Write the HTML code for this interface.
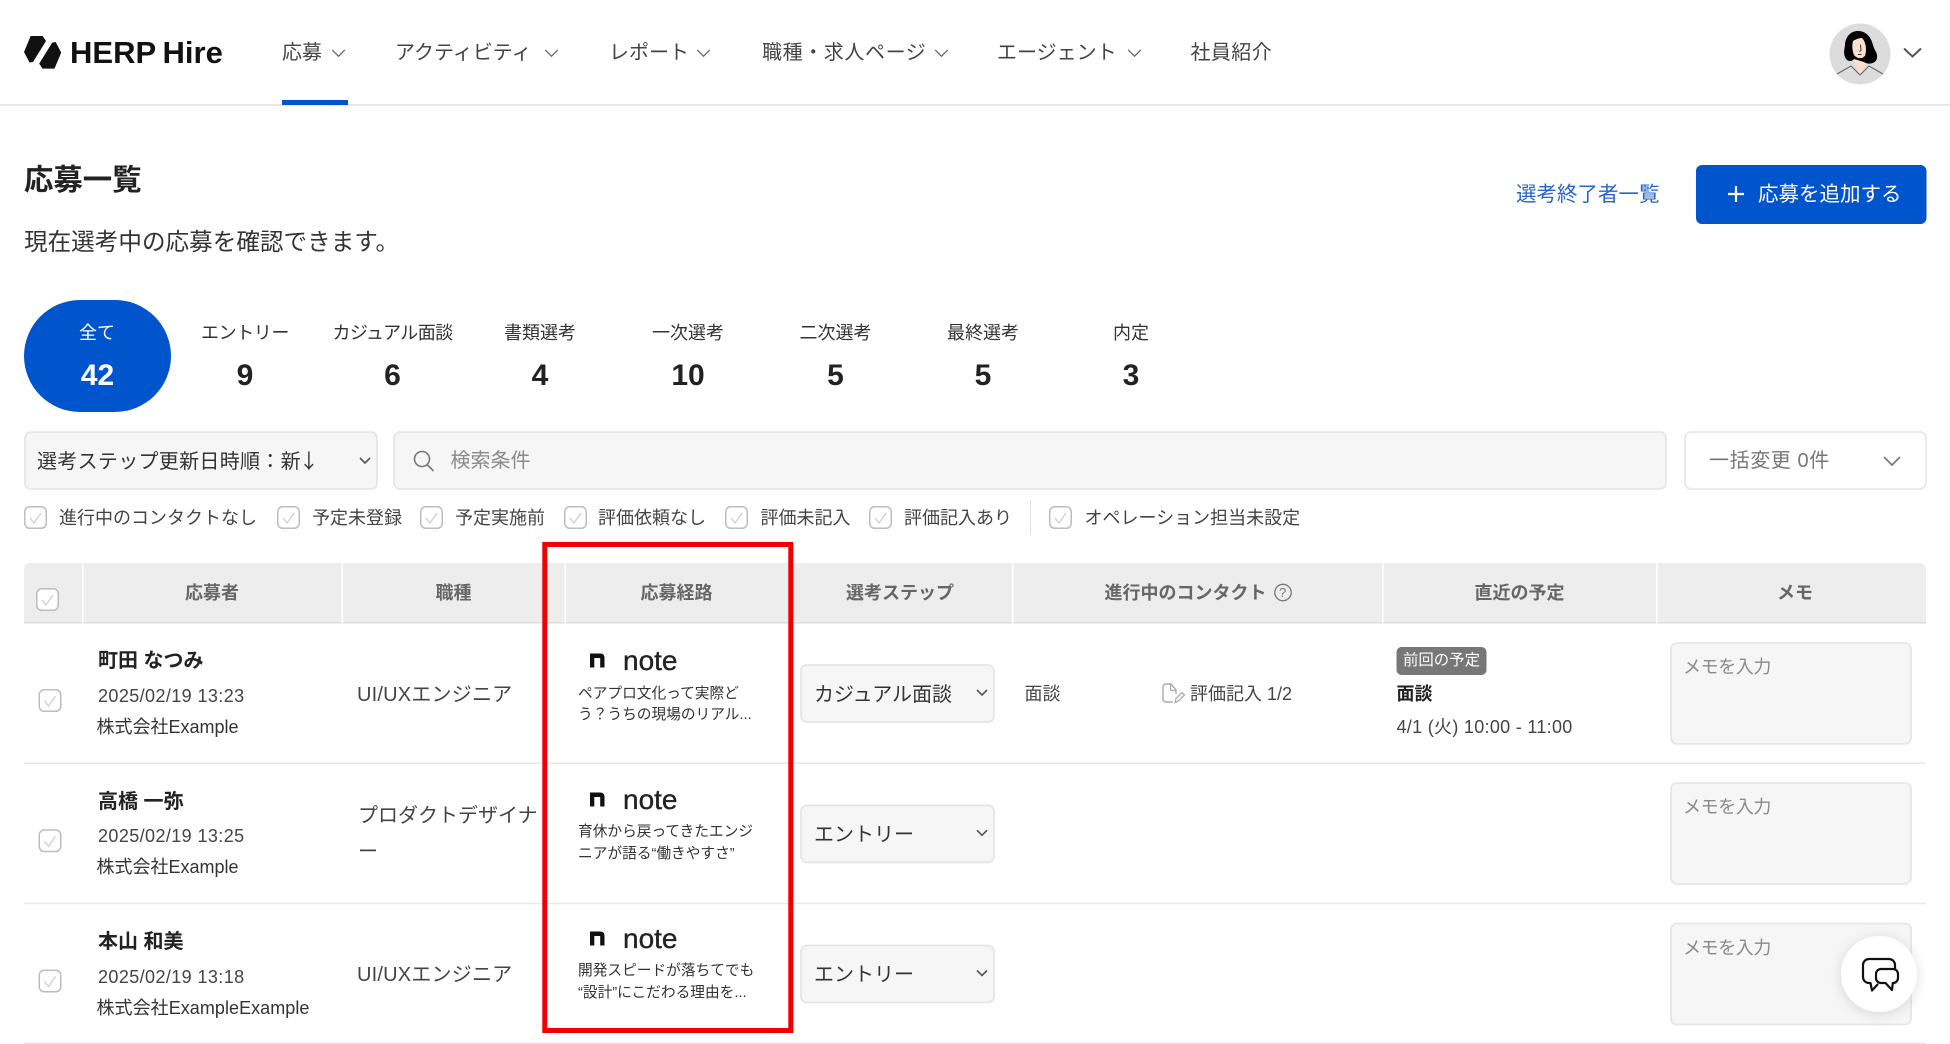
<!DOCTYPE html>
<html lang="ja"><head><meta charset="utf-8"><title>応募一覧</title>
<style>
html,body{margin:0;padding:0;background:#fff}
body{width:1950px;height:1044px;position:relative;overflow:hidden;font-family:"Liberation Sans","Noto Sans CJK JP",sans-serif;color:#333}
svg.bg{position:absolute;left:0;top:0}
.t{position:absolute;white-space:nowrap;line-height:40px;height:40px;font-size:18px}
.c{transform:translateX(-50%)}
.n{font-size:20px;color:#444}
.h{font-weight:700;color:#666;font-size:18px}
.s{font-size:18px;color:#444}
.num{font-size:30px;font-weight:700;color:#222}
.b{font-weight:700;color:#222}
.d{font-size:14.7px;color:#333}
.g{color:#8a8a8a}
.nt{font-size:28px;color:#222;-webkit-text-stroke:.35px #222}
</style></head><body>
<svg class="bg" width="1950" height="1044" viewBox="0 0 1950 1044" fill="none">
<defs>
<symbol id="cb" viewBox="0 0 23 23" overflow="visible"><rect x=".75" y=".75" width="21.5" height="21.5" rx="5" fill="#fff" stroke="#bdbdbd" stroke-width="1.5"/><path d="M6 12l4 5 7-10" stroke="#cfcfcf" stroke-width="1.3"/></symbol>
<symbol id="cv" viewBox="0 0 16 10" overflow="visible"><path d="M1 1l7 7 7-7" stroke="#666" stroke-width="1.4"/></symbol>
<symbol id="sc" viewBox="0 0 12 8" overflow="visible"><path d="M1 1l5 5 5-5" stroke="#555" stroke-width="1.6"/></symbol>
</defs>
<!-- header -->
<rect x="0" y="104" width="1950" height="2" fill="#e8e8e8"/>
<rect x="282" y="100" width="66" height="5" fill="#0055cc"/>
<path d="M30.7 36H42.7L46 41 33 62 29.5 62.5 24 52Z" fill="#111"/>
<path d="M54.5 68.6H42.5L39.2 63.6 52.2 42.6 55.7 42 61.2 52.6Z" fill="#111"/>
<use href="#cv" x="331" y="49" width="15" height="9"/>
<use href="#cv" x="544" y="49" width="15" height="9"/>
<use href="#cv" x="696" y="49" width="15" height="9"/>
<use href="#cv" x="934" y="49" width="15" height="9"/>
<use href="#cv" x="1127" y="49" width="15" height="9"/>
<!-- avatar -->
<circle cx="1860" cy="54" r="30.5" fill="#dcdcdc"/>
<path d="M1854 56L1855 64 1860 75 1866 64 1866 56Z" fill="#fbe0cc"/>
<path d="M1837 74L1851 66 1860 75 1869 66 1883 74" stroke="#666" stroke-width="1.1"/>
<path d="M1858 31C1866 31 1871 37 1873 45 1874 50 1878 53 1877 58 1876 64 1868 65 1864 62L1854 59C1852 62 1847 62 1845 57 1843 52 1845 48 1845 44 1846 36 1851 31 1858 31Z" fill="#000"/>
<path d="M1853 41C1856 39 1860 38 1862 38 1866 42 1867 50 1865 56 1862 59 1857 59 1854 55 1852 50 1852 45 1853 41Z" fill="#fbe0cc"/>
<path d="M1860.500 44.500l.5 6-1.500 1M1858 54.500h3.500" stroke="#333" stroke-width="1"/>
<path d="M1904 48.500l8.500 8 8.500-8" stroke="#555" stroke-width="2"/>
<!-- add button -->
<rect x="1696" y="165" width="230.500" height="59" rx="6" fill="#0055cc"/>
<path d="M1736 186v16M1728 194h16" stroke="#fff" stroke-width="2.200"/>
<!-- pill -->
<rect x="24" y="300" width="147" height="112" rx="56" fill="#0055cc"/>
<!-- filters -->
<rect x="25" y="432" width="352" height="57" rx="6" fill="#f6f6f6" stroke="#e6e6e6" stroke-width="1.800"/>
<use href="#sc" x="359" y="457" width="12" height="8"/>
<rect x="394" y="432" width="1272" height="57" rx="6" fill="#f6f6f6" stroke="#e6e6e6" stroke-width="1.800"/>
<circle cx="422" cy="459" r="7.500" stroke="#777" stroke-width="1.600"/><path d="M427.500 465l6 6" stroke="#777" stroke-width="1.600"/>
<rect x="1685" y="432" width="241" height="57" rx="6" fill="#fff" stroke="#e8e8e8" stroke-width="1.800"/>
<path d="M1884 457l8 8 8-8" stroke="#777" stroke-width="1.700"/>
<use href="#cb" x="24" y="506" width="23" height="23"/>
<use href="#cb" x="277" y="506" width="23" height="23"/>
<use href="#cb" x="420" y="506" width="23" height="23"/>
<use href="#cb" x="564" y="506" width="23" height="23"/>
<use href="#cb" x="725" y="506" width="23" height="23"/>
<use href="#cb" x="869" y="506" width="23" height="23"/>
<use href="#cb" x="1049" y="506" width="23" height="23"/>
<rect x="1030" y="500" width="1" height="34" fill="#e3e3e3"/>
<!-- table head -->
<path d="M30 563H1920a6 6 0 0 1 6 6V622H24V569a6 6 0 0 1 6-6Z" fill="#ededed"/>
<rect x="24" y="622" width="1902" height="1.500" fill="#dedede"/>
<g fill="#fff"><rect x="82" y="563" width="1.600" height="60"/><rect x="341.500" y="563" width="1.600" height="60"/><rect x="564.500" y="563" width="1.600" height="60"/><rect x="1012" y="563" width="1.600" height="60"/><rect x="1382" y="563" width="1.600" height="60"/><rect x="1656" y="563" width="1.600" height="60"/></g>
<use href="#cb" x="36" y="588" width="23" height="23"/>
<circle cx="1283" cy="592.500" r="8.200" stroke="#777" stroke-width="1.300"/>
<!-- rows -->
<g fill="#e8e8e8"><rect x="24" y="762.500" width="1902" height="1.500"/><rect x="24" y="902.800" width="1902" height="1.500"/><rect x="24" y="1042.500" width="1902" height="1.500"/></g>
<use href="#cb" x="38.500" y="689" width="23" height="23"/>
<use href="#cb" x="38.500" y="829.300" width="23" height="23"/>
<use href="#cb" x="38.500" y="969.500" width="23" height="23"/>
<!-- note n icons -->
<g fill="#111"><path d="M590 653.500h10c3 0 4.500 1.500 4.500 4.500v9.500h-4.300v-9.500h-5.900v9.500h-4.300z"/><path d="M590 792.500h10c3 0 4.500 1.500 4.500 4.500v9.500h-4.300v-9.500h-5.900v9.500h-4.300z"/><path d="M590 931.500h10c3 0 4.500 1.500 4.500 4.500v9.500h-4.300v-9.500h-5.900v9.500h-4.300z"/></g>
<!-- step selects -->
<rect x="801" y="665" width="193" height="57" rx="6" fill="#f6f6f6" stroke="#e6e6e6" stroke-width="1.800"/>
<rect x="801" y="805.300" width="193" height="57" rx="6" fill="#f6f6f6" stroke="#e6e6e6" stroke-width="1.800"/>
<rect x="801" y="945.500" width="193" height="57" rx="6" fill="#f6f6f6" stroke="#e6e6e6" stroke-width="1.800"/>
<use href="#sc" x="976" y="689" width="12" height="8"/>
<use href="#sc" x="976" y="829.300" width="12" height="8"/>
<use href="#sc" x="976" y="969.500" width="12" height="8"/>
<!-- eval icon -->
<path d="M1173 702H1166a3 3 0 0 1-3-3V687a3 3 0 0 1 3-3H1171L1176 690V694" stroke="#aaa" stroke-width="1.400"/><path d="M1170.500 684v5c0 1 .5 1.500 1.500 1.500h4" stroke="#aaa" stroke-width="1.200"/><path d="M1175 702.500l1-4 6-6 2.500 2.500-6 6z" stroke="#aaa" stroke-width="1.300"/>
<!-- badge -->
<rect x="1396.500" y="647" width="90" height="28" rx="5" fill="#777"/>
<!-- memo -->
<rect x="1671" y="643" width="240" height="101" rx="6" fill="#f6f6f6" stroke="#e6e6e6" stroke-width="1.800"/>
<rect x="1671" y="783" width="240" height="101" rx="6" fill="#f6f6f6" stroke="#e6e6e6" stroke-width="1.800"/>
<rect x="1671" y="923.500" width="240" height="101" rx="6" fill="#f6f6f6" stroke="#e6e6e6" stroke-width="1.800"/>
<!-- red box -->
<rect x="544.800" y="544.500" width="246" height="486" stroke="#f00000" stroke-width="5"/>
<!-- chat -->
<defs><filter id="sh" x="-30%" y="-30%" width="160%" height="160%"><feDropShadow dx="0" dy="2" stdDeviation="6" flood-color="#000" flood-opacity=".13"/></filter></defs>
<circle cx="1879" cy="974" r="38" fill="#fff" filter="url(#sh)"/>
<path d="M1895 968.500V965a6 6 0 0 0-6-6H1869a6 6 0 0 0-6 6V977a6 6 0 0 0 6 6H1870.500L1872 990.500 1878 984" stroke="#111" stroke-width="2.200" stroke-linejoin="round"/>
<path d="M1881 969H1893a5 5 0 0 1 5 5V978a5 5 0 0 1-5 5H1892.800L1892 990 1885.500 983H1881a5 5 0 0 1-5-5V974a5 5 0 0 1 5-5Z" stroke="#111" stroke-width="2.200" stroke-linejoin="round" fill="#fff"/>
</svg>

<!-- header text -->
<div class="t" style="left:70px;top:33px;font-size:31px;font-weight:700;color:#111">HERP</div>
<div class="t" style="left:162.500px;top:33px;font-size:31px;font-weight:700;color:#111">Hire</div>
<div class="t n" style="left:282px;top:33px">応募</div>
<div class="t n" style="left:395px;top:33px">アクティビティ</div>
<div class="t n" style="left:609px;top:33px">レポート</div>
<div class="t n" style="left:762px;top:33px;letter-spacing:.6px">職種・求人ページ</div>
<div class="t n" style="left:997px;top:33px">エージェント</div>
<div class="t n" style="left:1190.500px;top:33px;letter-spacing:.4px">社員紹介</div>
<div class="t" style="left:24px;top:161px;font-size:29.400px;font-weight:700;color:#222">応募一覧</div>
<div class="t" style="left:24px;top:222.500px;font-size:23.600px;color:#333">現在選考中の応募を確認できます。</div>
<div class="t" style="left:1516px;top:175px;font-size:20.500px;color:#2466cc">選考終了者一覧</div>
<div class="t" style="left:1758px;top:175px;font-size:20.500px;color:#fff">応募を追加する</div>

<!-- stats -->
<div class="t c" style="left:97px;top:313px;color:#fff">全て</div>
<div class="t c num" style="left:97.500px;top:356px;color:#fff">42</div>
<div class="t c" style="left:245px;top:313px;letter-spacing:-.4px">エントリー</div><div class="t c num" style="left:245px;top:356px">9</div>
<div class="t c" style="left:392.500px;top:313px;letter-spacing:-.6px">カジュアル面談</div><div class="t c num" style="left:392.500px;top:356px">6</div>
<div class="t c" style="left:540px;top:313px">書類選考</div><div class="t c num" style="left:540px;top:356px">4</div>
<div class="t c" style="left:688px;top:313px">一次選考</div><div class="t c num" style="left:688px;top:356px">10</div>
<div class="t c" style="left:835.500px;top:313px">二次選考</div><div class="t c num" style="left:835.500px;top:356px">5</div>
<div class="t c" style="left:983px;top:313px">最終選考</div><div class="t c num" style="left:983px;top:356px">5</div>
<div class="t c" style="left:1131px;top:313px">内定</div><div class="t c num" style="left:1131px;top:356px">3</div>

<!-- filters -->
<div class="t" style="left:37px;top:440px;font-size:20px;color:#333;letter-spacing:.3px">選考ステップ更新日時順：新<span style="font-family:'Noto Sans CJK JP',sans-serif;margin-left:-2px">↓</span></div>
<div class="t g" style="left:450.500px;top:441px;font-size:20px">検索条件</div>
<div class="t" style="left:1709px;top:441px;font-size:20px;color:#777;letter-spacing:.6px">一括変更 0件</div>
<div class="t s" style="left:59px;top:498px">進行中のコンタクトなし</div>
<div class="t s" style="left:312px;top:498px">予定未登録</div>
<div class="t s" style="left:455px;top:498px">予定実施前</div>
<div class="t s" style="left:598px;top:498px">評価依頼なし</div>
<div class="t s" style="left:760.500px;top:498px">評価未記入</div>
<div class="t s" style="left:904px;top:498px">評価記入あり</div>
<div class="t s" style="left:1084.500px;top:498px">オペレーション担当未設定</div>

<!-- table head -->
<div class="t h c" style="left:212px;top:573px">応募者</div>
<div class="t h c" style="left:453.500px;top:573px">職種</div>
<div class="t h c" style="left:676.500px;top:573px">応募経路</div>
<div class="t h c" style="left:900px;top:573px">選考ステップ</div>
<div class="t h" style="left:1104.500px;top:573px">進行中のコンタクト</div>
<div class="t" style="left:1279px;top:572.500px;font-size:13px;color:#777">?</div>
<div class="t h c" style="left:1519.500px;top:573px">直近の予定</div>
<div class="t h c" style="left:1795px;top:573px">メモ</div>

<!-- row 1 -->
<div class="t b" style="left:98px;top:641px;font-size:20px">町田 なつみ</div>
<div class="t s" style="left:98px;top:675.500px;letter-spacing:.4px">2025/02/19 13:23</div>
<div class="t" style="left:96.500px;top:707px;color:#333">株式会社Example</div>
<div class="t n" style="left:357px;top:675px;letter-spacing:.2px">UI/UXエンジニア</div>
<div class="t nt" style="left:623px;top:641px">note</div>
<div class="t d" style="left:578px;top:673.500px">ペアプロ文化って実際ど</div>
<div class="t d" style="left:578px;top:695px">う？うちの現場のリアル...</div>
<div class="t n" style="left:814px;top:675px;color:#333">カジュアル面談</div>
<div class="t s" style="left:1024.500px;top:674px">面談</div>
<div class="t s" style="left:1190px;top:674px">評価記入 1/2</div>
<div class="t" style="left:1403px;top:641px;font-size:15.400px;color:#fff">前回の予定</div>
<div class="t b" style="left:1396.500px;top:674px">面談</div>
<div class="t s" style="left:1396.500px;top:707px;letter-spacing:.3px">4/1 (火) 10:00 - 11:00</div>
<div class="t g" style="left:1683px;top:647px;letter-spacing:-.4px">メモを入力</div>

<!-- row 2 -->
<div class="t b" style="left:98px;top:782px;font-size:20px">高橋 一弥</div>
<div class="t s" style="left:98px;top:815.800px;letter-spacing:.4px">2025/02/19 13:25</div>
<div class="t" style="left:96.500px;top:847.300px;color:#333">株式会社Example</div>
<div class="t n" style="left:358px;top:795.500px">プロダクトデザイナ</div>
<div class="t n" style="left:358px;top:831.500px">ー</div>
<div class="t nt" style="left:623px;top:780px">note</div>
<div class="t d" style="left:578px;top:811.500px">育休から戻ってきたエンジ</div>
<div class="t d" style="left:578px;top:833.500px">ニアが語る“働きやすさ”</div>
<div class="t n" style="left:814px;top:815px;color:#333">エントリー</div>
<div class="t g" style="left:1683px;top:787px;letter-spacing:-.4px">メモを入力</div>

<!-- row 3 -->
<div class="t b" style="left:98px;top:922px;font-size:20px">本山 和美</div>
<div class="t s" style="left:98px;top:956.500px;letter-spacing:.4px">2025/02/19 13:18</div>
<div class="t" style="left:96.500px;top:987.500px;color:#333;letter-spacing:.05px">株式会社ExampleExample</div>
<div class="t n" style="left:357px;top:954.500px;letter-spacing:.2px">UI/UXエンジニア</div>
<div class="t nt" style="left:623px;top:919px">note</div>
<div class="t d" style="left:578px;top:951px">開発スピードが落ちてでも</div>
<div class="t d" style="left:578px;top:973px">“設計”にこだわる理由を...</div>
<div class="t n" style="left:814px;top:955px;color:#333">エントリー</div>
<div class="t g" style="left:1683px;top:927.500px;letter-spacing:-.4px">メモを入力</div>
</body></html>
